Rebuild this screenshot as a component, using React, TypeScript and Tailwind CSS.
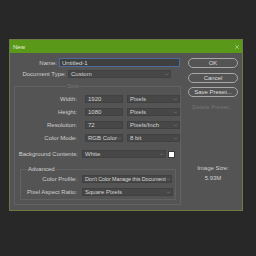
import { ChevronDown, X } from "lucide-react";

const font = { fontFamily: '"Liberation Sans", Arial, sans-serif' };

function Select({ value, w, small }: { value: string; w: string; small?: boolean }) {
  return (
    <div
      className={`${w} h-[8px] flex items-center justify-between pl-[2px] pr-[1px] bg-[#474747] border border-[#414141] text-[#d4d4d4] overflow-hidden whitespace-nowrap`}
    >
      <span className={`leading-[6px] ${small ? "text-[5.4px] tracking-[-0.1px]" : ""}`}>{value}</span>
      <ChevronDown size={5} strokeWidth={2} className="text-[#9a9a9a] shrink-0" />
    </div>
  );
}

function Input({ value, w }: { value: string; w: string }) {
  return (
    <div
      className={`${w} h-[8px] flex items-center pl-[2px] bg-[#474747] border border-[#414141] text-[#d4d4d4] leading-[6px]`}
    >
      {value}
    </div>
  );
}

function Row({
  label,
  lw,
  gap,
  mt,
  children,
}: {
  label: string;
  lw: string;
  gap: string;
  mt: string;
  children: React.ReactNode;
}) {
  return (
    <div className={`flex items-center ${mt}`}>
      <span className={`${lw} text-right leading-[8px] text-[#cfcfcf] whitespace-nowrap`}>
        {label}
      </span>
      <div className={`flex items-center ${gap}`}>{children}</div>
    </div>
  );
}

function PillButton({ label, mt }: { label: string; mt: string }) {
  return (
    <div
      className={`${mt} w-[50px] h-[10px] rounded-full border border-[#a8a8a8] flex items-center justify-center text-[#dcdcdc] leading-[6px]`}
    >
      {label}
    </div>
  );
}

export default function App() {
  return (
    <div
      className="w-[256px] h-[256px] bg-[#282828] pt-[39px] pl-[9px] text-[6px]"
      style={font}
    >
      <div className="w-[234px] h-[172px] border border-[#6c7a43] bg-[#545454] flex flex-col">
        <div className="h-[13px] bg-[#599818] flex items-center justify-between pl-[3px] pr-[2px] text-[#e8f0dc]">
          <span className="leading-[6px]">New</span>
          <X size={6} strokeWidth={2} className="text-[#e8f0dc]" />
        </div>

        <div className="flex">
          <div className="w-[173px]">
            <div className="flex items-center mt-[5px]">
              <span className="w-[47px] text-right text-[#cfcfcf] leading-[8px]">Name:</span>
              <div className="ml-[2px] w-[121px] h-[9px] flex items-center pl-[2px] bg-[#3f3f3f] border border-[#4a6d9c] text-[#dcdcdc] leading-[6px]">
                Untitled-1
              </div>
            </div>
            <div className="flex items-center mt-[3px]">
              <span className="w-[56px] text-right text-[#cfcfcf] leading-[8px]">Document Type:</span>
              <div className="ml-[2px]">
                <Select value="Custom" w="w-[103px]" />
              </div>
            </div>

            <div className="ml-[4px] mt-[8px] w-[167px] h-[119px] border border-[#626262]">
              <div className="-mt-[4px] ml-[51px] w-fit h-[7px] px-[1px] bg-[#545454] text-[#767676] leading-[7px]">
                Size:
              </div>
              <Row label="Width:" lw="w-[63px]" gap="gap-[4px]" mt="mt-[5px]">
                <div className="ml-[4px]" />
                <Input value="1920" w="w-[38px]" />
                <Select value="Pixels" w="w-[53px]" />
              </Row>
              <Row label="Height:" lw="w-[63px]" gap="gap-[4px]" mt="mt-[5px]">
                <div className="ml-[4px]" />
                <Input value="1080" w="w-[38px]" />
                <Select value="Pixels" w="w-[53px]" />
              </Row>
              <Row label="Resolution:" lw="w-[63px]" gap="gap-[4px]" mt="mt-[5px]">
                <div className="ml-[4px]" />
                <Input value="72" w="w-[38px]" />
                <Select value="Pixels/Inch" w="w-[53px]" />
              </Row>
              <Row label="Color Mode:" lw="w-[63px]" gap="gap-[4px]" mt="mt-[5px]">
                <div className="ml-[4px]" />
                <Select value="RGB Color" w="w-[38px]" />
                <Select value="8 bit" w="w-[53px]" />
              </Row>
              <Row label="Background Contents:" lw="w-[63px]" gap="gap-[2px]" mt="mt-[8px]">
                <div className="ml-[2px]" />
                <Select value="White" w="w-[84px]" />
                <div className="w-[7px] h-[7px] bg-white border border-[#3a3a3a]" />
              </Row>

              <div className="ml-[5px] mt-[11px] w-[156px] h-[31px] border border-[#626262]">
                <div className="-mt-[4px] ml-[6px] w-fit h-[7px] px-[1px] bg-[#545454] text-[#cfcfcf] leading-[7px]">
                  Advanced
                </div>
                <Row label="Color Profile:" lw="w-[56px]" gap="gap-[5px]" mt="mt-[2px]">
                  <div />
                  <Select value="Don't Color Manage this Document" w="w-[90px]" small />
                </Row>
                <Row label="Pixel Aspect Ratio:" lw="w-[56px]" gap="gap-[5px]" mt="mt-[5px]">
                  <div />
                  <Select value="Square Pixels" w="w-[91px]" />
                </Row>
              </div>
            </div>
          </div>

          <div className="ml-[5px] flex flex-col">
            <PillButton label="OK" mt="mt-[5px]" />
            <PillButton label="Cancel" mt="mt-[5px]" />
            <PillButton label="Save Preset..." mt="mt-[4px]" />
            <div className="mt-[7px] w-[50px] text-center text-[#757575] leading-[6px]">Delete Preset...</div>
            <div className="mt-[55px] w-[50px] text-center text-[#cfcfcf] leading-[6px]">Image Size:</div>
            <div className="mt-[4px] w-[50px] text-center text-[#cfcfcf] leading-[6px]">5.93M</div>
          </div>
        </div>
      </div>
    </div>
  );
}
